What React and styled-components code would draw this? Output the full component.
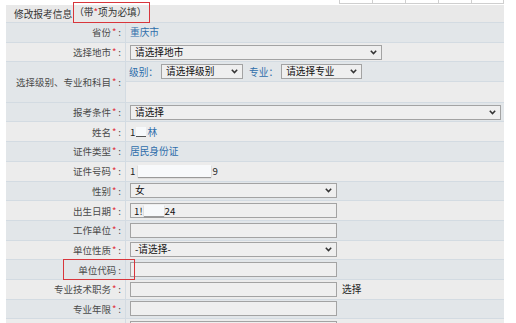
import styled, { createGlobalStyle } from "styled-components";

const GlobalStyle = createGlobalStyle`
  html, body {
    margin: 0;
    padding: 0;
    background: #ffffff;
  }
  body {
    font-family: "Noto Sans CJK SC", "Liberation Sans", sans-serif;
    font-size: 9.7px;
    color: #444;
  }
`;

const Page = styled.div`
  width: 498px;
  padding-left: 6px;
`;

const TopStrip = styled.div`
  display: flex;
  justify-content: flex-end;
  height: 4px;
  border-bottom: 1px solid transparent;
`;

const TopCell = styled.div`
  width: 33px;
  height: 4px;
  box-sizing: border-box;
  border-left: 1px solid #cfcfcf;
  border-bottom: 1px solid #cfcfcf;
  &:last-child {
    border-right: 1px solid #cfcfcf;
  }
`;

const Header = styled.div`
  height: 17px;
  display: flex;
  align-items: center;
  padding-left: 8px;
  background: #e9e9e9;
  border-bottom: 1px solid #d3dbe2;
  color: #333;
  font-size: 9.7px;
`;

const Marked = styled.span`
  align-self: stretch;
  display: flex;
  align-items: center;
  margin: -3px 0 -1px 1px;
  padding: 0 3px 2px 0;
  border: 1px solid #d8363c;
  box-sizing: border-box;
`;

const Row = styled.div`
  display: grid;
  grid-template-columns: 120px 1fr;
  height: ${(p) => (p.$tall ? "auto" : "19.7px")};
  box-sizing: border-box;
  background: ${(p) => (p.$tone === "blue" ? "#e2e6e9" : "#ececec")};
  border-bottom: 1px solid #d3dbe2;
`;

const Label = styled.div`
  position: relative;
  display: flex;
  align-items: center;
  justify-content: flex-end;
  padding-right: 4px;
  border-right: 1px solid #d3dbe2;
  color: #4a4a4a;
  font-size: 9.5px;
  white-space: nowrap;

  ${(p) =>
    p.$boxed &&
    `
    &::after {
      content: "";
      position: absolute;
      left: 57px;
      width: 70px;
      top: -1px;
      bottom: -1px;
      border: 1px solid #d8363c;
    }
  `}
`;

const Star = styled.span`
  color: #e0303a;
  margin-left: 1px;
`;

const Colon = styled.span`
  margin-left: 2px;
`;

const Value = styled.div`
  display: flex;
  align-items: center;
  padding-left: 4px;
  gap: 5px;
  color: ${(p) => (p.$link ? "#2f6eab" : "#222")};
`;

const SubStack = styled.div`
  display: flex;
  flex-direction: column;
`;

const SubRow = styled.div`
  height: 19.7px;
  box-sizing: border-box;
  display: flex;
  align-items: center;
  padding-left: 3px;
  background: ${(p) => (p.$tone === "blue" ? "#e2e6e9" : "#ececec")};
  border-bottom: ${(p) => (p.$last ? "none" : "1px solid #d3dbe2")};
`;

const Caption = styled.span`
  color: #2f6eab;
  margin-right: 3px;
`;

const SelectWrap = styled.div`
  position: relative;
  width: ${(p) => p.$w}px;
  height: 15px;
  margin-right: ${(p) => p.$mr || 0}px;
`;

const NativeSelect = styled.select`
  appearance: none;
  width: 100%;
  height: 100%;
  box-sizing: border-box;
  border: 1px solid #a3a3a3;
  border-radius: 0;
  background: #efefef;
  font-family: inherit;
  font-size: 9.7px;
  color: #111;
  padding: 0 0 0 4px;
  line-height: 13px;
  outline: none;
`;

const Chevron = styled.svg`
  position: absolute;
  right: 5px;
  top: 5px;
  pointer-events: none;
`;

const TextBox = styled.div`
  width: 207px;
  height: 15px;
  box-sizing: border-box;
  border: 1px solid #a3a3a3;
  background: #efefef;
  display: flex;
  align-items: center;
  padding-left: 3px;
  color: #111;
`;

const Blot = styled.span`
  display: inline-block;
  width: ${(p) => p.$w}px;
  height: ${(p) => p.$h || 11}px;
  background: #f7f9fb;
  box-shadow: ${(p) => (p.$shadow ? "0 1px 1px rgba(0,0,0,0.35)" : "none")};
  border-bottom: ${(p) => (p.$line ? "1px solid #555" : "none")};
  margin: 0 1px;
`;

const Plain = styled.span`
  color: #222;
`;

const Select = ({ w, mr, children }) => (
  <SelectWrap $w={w} $mr={mr}>
    <NativeSelect defaultValue={children}>
      <option>{children}</option>
    </NativeSelect>
    <Chevron width="7" height="5" viewBox="0 0 7 5">
      <path d="M0.8 0.8 L3.5 3.6 L6.2 0.8" fill="none" stroke="#333" strokeWidth="1.5" />
    </Chevron>
  </SelectWrap>
);

const Field = ({ children, star = true, spaced, boxed }) => (
  <Label $boxed={boxed}>
    {children}
    {spaced && " "}
    {star && <Star>*</Star>}
    <Colon>:</Colon>
  </Label>
);

export default function App() {
  return (
    <>
      <GlobalStyle />
      <Page>
        <TopStrip>
          {[0, 1, 2, 3, 4].map((i) => (
            <TopCell key={i} />
          ))}
        </TopStrip>
        <Header>
          修改报考信息
          <Marked>
            （带<Star style={{ margin: 0 }}>*</Star>项为必填）
          </Marked>
        </Header>

        <Row $tone="blue">
          <Field>省份</Field>
          <Value $link>重庆市</Value>
        </Row>
        <Row $tone="gray">
          <Field>选择地市</Field>
          <Value>
            <Select w={252}>请选择地市</Select>
          </Value>
        </Row>
        <Row $tone="blue" $tall>
          <Field>选择级别、专业和科目</Field>
          <SubStack>
            <SubRow $tone="blue">
              <Caption>级别：</Caption>
              <Select w={82} mr={6}>请选择级别</Select>
              <Caption>专业：</Caption>
              <Select w={81}>请选择专业</Select>
            </SubRow>
            <SubRow $tone="gray" $last />
          </SubStack>
        </Row>
        <Row $tone="blue">
          <Field spaced>报考条件</Field>
          <Value>
            <Select w={371}>请选择</Select>
          </Value>
        </Row>
        <Row $tone="gray">
          <Field>姓名</Field>
          <Value $link style={{ gap: 0 }}>
            <Plain>1</Plain>
            <Blot $w={10} $h={9} $line />
            林
          </Value>
        </Row>
        <Row $tone="blue">
          <Field>证件类型</Field>
          <Value $link>居民身份证</Value>
        </Row>
        <Row $tone="gray">
          <Field>证件号码</Field>
          <Value style={{ gap: 0 }}>
            <Plain>1</Plain>
            <Blot $w={73} $h={12} $shadow style={{ marginLeft: 3 }} />
            <Plain>9</Plain>
          </Value>
        </Row>
        <Row $tone="blue">
          <Field>性别</Field>
          <Value>
            <Select w={207}>女</Select>
          </Value>
        </Row>
        <Row $tone="gray">
          <Field>出生日期</Field>
          <Value>
            <TextBox>
              1!
              <Blot $w={20} $h={11} $shadow />
              24
            </TextBox>
          </Value>
        </Row>
        <Row $tone="blue">
          <Field>工作单位</Field>
          <Value>
            <TextBox />
          </Value>
        </Row>
        <Row $tone="gray">
          <Field>单位性质</Field>
          <Value>
            <Select w={207}>-请选择-</Select>
          </Value>
        </Row>
        <Row $tone="blue">
          <Field star={false} boxed>
            单位代码
          </Field>
          <Value>
            <TextBox />
          </Value>
        </Row>
        <Row $tone="gray">
          <Field>专业技术职务</Field>
          <Value>
            <TextBox />
            <Plain>选择</Plain>
          </Value>
        </Row>
        <Row $tone="blue">
          <Field>专业年限</Field>
          <Value>
            <TextBox />
          </Value>
        </Row>
        <Row $tone="gray">
          <Field>工作年限</Field>
          <Value>
            <TextBox />
          </Value>
        </Row>
      </Page>
    </>
  );
}
